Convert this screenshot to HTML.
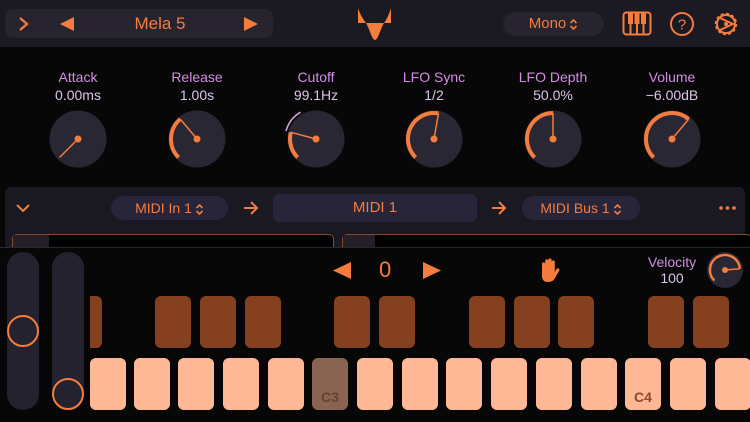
<!DOCTYPE html>
<html><head><meta charset="utf-8"><style>
*{margin:0;padding:0;box-sizing:border-box}
body{width:750px;height:422px;background:#070707;position:relative;overflow:hidden;font-family:"Liberation Sans",sans-serif;color:#f47c3c}
.a{position:absolute}
.top{left:0;top:0;width:750px;height:47px;background:#1b1921}
.lbl{color:#d38ee3;font-size:14px;text-align:center;width:110px}
.val{color:#dcc3ea;font-size:14px;text-align:center;width:110px}
.w{background:#ffb896;border-radius:6px;width:36px;height:52px;top:358px}
.b{background:#85411f;border-radius:6px;width:36px;height:52px;top:296px}
.ud{display:inline-block;vertical-align:middle;margin-left:3px}
</style></head><body>
<div class="a top"></div>
<div class="a" style="left:5px;top:9px;width:268px;height:29px;background:#27242f;border-radius:8px"></div>
<svg class="a" style="left:17px;top:15px" width="14" height="18"><path d="M3 3 L10 9 L3 15" stroke="#f47c3c" stroke-width="2.2" fill="none"/></svg>
<svg class="a" style="left:59px;top:16px" width="16" height="16"><path d="M15 1 L1 8 L15 15Z" fill="#f47c3c"/></svg>
<div class="a" style="left:100px;top:14px;width:120px;text-align:center;font-size:17px">Mela 5</div>
<svg class="a" style="left:243px;top:16px" width="16" height="16"><path d="M1 1 L15 8 L1 15Z" fill="#f47c3c"/></svg>
<svg class="a" style="left:356px;top:6px" width="38" height="36"><g fill="#f47c3c"><path d="M2 2 C4 8 7 13 10 17 L2 17 Z"/><path d="M10 17 C14 24 16 34 19 34 C22 34 24 24 28 17 Z"/><path d="M35 2 C33 8 31 13 28 17 L35 17 Z"/></g></svg>
<div class="a" style="left:503px;top:12px;width:101px;height:24px;background:#27242f;border-radius:12px"></div>
<div class="a" style="left:503px;top:15px;width:101px;text-align:center;font-size:15px">Mono<svg class="ud" width="9" height="13"><path d="M1.5 5 L4.5 2 L7.5 5 M1.5 8 L4.5 11 L7.5 8" stroke="#f47c3c" stroke-width="1.6" fill="none"/></svg></div>
<svg class="a" style="left:622px;top:11px" width="30" height="25"><rect x="1.5" y="1.5" width="27" height="22" rx="3" fill="none" stroke="#f47c3c" stroke-width="2"/><path d="M8.5 2v21M15 2v21M21.5 2v21" stroke="#f47c3c" stroke-width="2"/><rect x="6" y="2" width="5" height="11" fill="#f47c3c"/><rect x="12.5" y="2" width="5" height="11" fill="#f47c3c"/><rect x="19" y="2" width="5" height="11" fill="#f47c3c"/></svg>
<svg class="a" style="left:669px;top:11px" width="26" height="26"><circle cx="13" cy="13" r="11" fill="none" stroke="#f47c3c" stroke-width="2"/><text x="13" y="18.5" text-anchor="middle" font-size="15" fill="#f47c3c" font-family="Liberation Sans">?</text></svg>
<svg class="a" style="left:711px;top:9px" width="30" height="30"><circle cx="15" cy="15" r="10" fill="none" stroke="#f47c3c" stroke-width="2.4" stroke-dasharray="3 2.2"/><circle cx="15" cy="15" r="9" fill="none" stroke="#f47c3c" stroke-width="2"/><path d="M9 9 L22 15 L9 21" fill="none" stroke="#f47c3c" stroke-width="2"/><circle cx="15" cy="15" r="2" fill="#f47c3c"/></svg>

<div class="a lbl" style="left:23px;top:69px">Attack</div><div class="a val" style="left:23px;top:87px">0.00ms</div>
<div class="a lbl" style="left:142px;top:69px">Release</div><div class="a val" style="left:142px;top:87px">1.00s</div>
<div class="a lbl" style="left:261px;top:69px">Cutoff</div><div class="a val" style="left:261px;top:87px">99.1Hz</div>
<div class="a lbl" style="left:379px;top:69px">LFO Sync</div><div class="a val" style="left:379px;top:87px">1/2</div>
<div class="a lbl" style="left:498px;top:69px">LFO Depth</div><div class="a val" style="left:498px;top:87px">50.0%</div>
<div class="a lbl" style="left:617px;top:69px">Volume</div><div class="a val" style="left:617px;top:87px">−6.00dB</div>

<svg class="a" style="left:48px;top:109px;overflow:visible" width="60" height="60"><circle cx="30" cy="30" r="28.5" fill="#2a2735"/><line x1="30" y1="30" x2="11.6" y2="48.4" stroke="#f47c3c" stroke-width="1.5"/><circle cx="30" cy="30" r="3.5" fill="#f47c3c"/></svg>
<svg class="a" style="left:167px;top:109px;overflow:visible" width="60" height="60"><circle cx="30" cy="30" r="28.5" fill="#2a2735"/><path d="M11.6 48.4 A26 26 0 0 1 13.3 10.1" stroke="#f47c3c" stroke-width="4" fill="none"/><line x1="30" y1="30" x2="13.3" y2="10.1" stroke="#f47c3c" stroke-width="1.5"/><circle cx="30" cy="30" r="3.5" fill="#f47c3c"/></svg>
<svg class="a" style="left:286px;top:109px;overflow:visible" width="60" height="60"><circle cx="30" cy="30" r="28.5" fill="#2a2735"/><path d="M0.06 22 A31 31 0 0 1 14.5 3.2" stroke="#d9a6e6" stroke-width="1.5" fill="none"/><path d="M11.6 48.4 A26 26 0 0 1 4.9 23.3" stroke="#f47c3c" stroke-width="4" fill="none"/><line x1="30" y1="30" x2="4.9" y2="23.3" stroke="#f47c3c" stroke-width="1.5"/><circle cx="30" cy="30" r="3.5" fill="#f47c3c"/></svg>
<svg class="a" style="left:404px;top:109px;overflow:visible" width="60" height="60"><circle cx="30" cy="30" r="28.5" fill="#2a2735"/><path d="M11.6 48.4 A26 26 0 0 1 34.5 4.4" stroke="#f47c3c" stroke-width="4" fill="none"/><line x1="30" y1="30" x2="34.5" y2="4.4" stroke="#f47c3c" stroke-width="1.5"/><circle cx="30" cy="30" r="3.5" fill="#f47c3c"/></svg>
<svg class="a" style="left:523px;top:109px;overflow:visible" width="60" height="60"><circle cx="30" cy="30" r="28.5" fill="#2a2735"/><path d="M11.6 48.4 A26 26 0 0 1 30 4" stroke="#f47c3c" stroke-width="4" fill="none"/><line x1="30" y1="30" x2="30" y2="4" stroke="#f47c3c" stroke-width="1.5"/><circle cx="30" cy="30" r="3.5" fill="#f47c3c"/></svg>
<svg class="a" style="left:642px;top:109px;overflow:visible" width="60" height="60"><circle cx="30" cy="30" r="28.5" fill="#2a2735"/><path d="M11.6 48.4 A26 26 0 0 1 46.7 10.1" stroke="#f47c3c" stroke-width="4" fill="none"/><line x1="30" y1="30" x2="46.7" y2="10.1" stroke="#f47c3c" stroke-width="1.5"/><circle cx="30" cy="30" r="3.5" fill="#f47c3c"/></svg>

<div class="a" style="left:5px;top:187px;width:740px;height:62px;background:#1a1820;border-radius:6px"></div>
<svg class="a" style="left:15px;top:202px" width="16" height="12"><path d="M2 3 L8 9 L14 3" stroke="#f47c3c" stroke-width="2" fill="none"/></svg>
<div class="a" style="left:111px;top:196px;width:117px;height:24px;background:#28253a;border-radius:12px;text-align:center;font-size:14px;line-height:24px">MIDI In 1<svg class="ud" width="9" height="13"><path d="M1.5 5 L4.5 2 L7.5 5 M1.5 8 L4.5 11 L7.5 8" stroke="#f47c3c" stroke-width="1.6" fill="none"/></svg></div>
<svg class="a" style="left:242px;top:200px" width="18" height="16"><path d="M2 8 H15 M9 2 L15 8 L9 14" stroke="#f47c3c" stroke-width="2" fill="none"/></svg>
<div class="a" style="left:273px;top:194px;width:204px;height:28px;background:#28253a;border-radius:6px;text-align:center;font-size:15px;line-height:28px">MIDI 1</div>
<svg class="a" style="left:490px;top:200px" width="18" height="16"><path d="M2 8 H15 M9 2 L15 8 L9 14" stroke="#f47c3c" stroke-width="2" fill="none"/></svg>
<div class="a" style="left:522px;top:196px;width:118px;height:24px;background:#28253a;border-radius:12px;text-align:center;font-size:14px;line-height:24px">MIDI Bus 1<svg class="ud" width="9" height="13"><path d="M1.5 5 L4.5 2 L7.5 5 M1.5 8 L4.5 11 L7.5 8" stroke="#f47c3c" stroke-width="1.6" fill="none"/></svg></div>
<svg class="a" style="left:718px;top:205px" width="20" height="6"><circle cx="3" cy="3" r="1.8" fill="#f47c3c"/><circle cx="9.5" cy="3" r="1.8" fill="#f47c3c"/><circle cx="16" cy="3" r="1.8" fill="#f47c3c"/></svg>
<div class="a" style="left:12px;top:234px;width:322px;height:20px;border:1px solid #8a4a2a;border-radius:5px;background:#000"></div>
<div class="a" style="left:13px;top:235px;width:36px;height:14px;background:#241f28"></div>
<div class="a" style="left:342px;top:234px;width:410px;height:20px;border:1px solid #8a4a2a;border-radius:5px;background:#000"></div>
<div class="a" style="left:343px;top:235px;width:32px;height:14px;background:#241f28"></div>

<div class="a" style="left:0;top:247px;width:750px;height:175px;background:#070707;border-top:1px solid #2a2732"></div>
<div class="a" style="left:7px;top:252px;width:32px;height:158px;background:#25222f;border-radius:16px"></div>
<div class="a" style="left:52px;top:252px;width:32px;height:158px;background:#25222f;border-radius:16px"></div>
<div class="a" style="left:7px;top:315px;width:32px;height:32px;border:2px solid #f47c3c;border-radius:50%"></div>
<div class="a" style="left:52px;top:378px;width:32px;height:32px;border:2px solid #f47c3c;border-radius:50%"></div>

<svg class="a" style="left:332px;top:261px" width="20" height="20"><path d="M19 1 L1 9.5 L19 18Z" fill="#f47c3c"/></svg>
<div class="a" style="left:379px;top:257px;font-size:22px">0</div>
<svg class="a" style="left:422px;top:261px" width="20" height="20"><path d="M1 1 L19 9.5 L1 18Z" fill="#f47c3c"/></svg>
<svg class="a" style="left:538px;top:257px" width="22" height="26"><path d="M4 14 V7 a1.6 1.6 0 0 1 3.2 0 V12 V4 a1.6 1.6 0 0 1 3.2 0 V12 V3 a1.6 1.6 0 0 1 3.2 0 V12 V5 a1.6 1.6 0 0 1 3.2 0 V15 L18.5 12 a1.6 1.6 0 0 1 2.8 1.5 L17 21 Q15 25 10 25 Q4 25 4 19Z" fill="#f47c3c"/></svg>
<div class="a" style="left:632px;top:254px;width:80px;text-align:center;color:#d38ee3;font-size:14px">Velocity</div>
<div class="a" style="left:632px;top:270px;width:80px;text-align:center;color:#dcc3ea;font-size:14px">100</div>
<svg class="a" style="left:705px;top:250px;overflow:visible" width="40" height="40"><circle cx="20" cy="20" r="18" fill="#2a2735"/><path d="M9.4 30.6 A15 15 0 1 1 34.9 18.7" stroke="#f47c3c" stroke-width="2.5" fill="none"/><line x1="20" y1="20" x2="34.9" y2="18.7" stroke="#f47c3c" stroke-width="1.5"/><circle cx="20" cy="20" r="3" fill="#f47c3c"/></svg>

<div class="a b" style="left:90px;width:12px;border-radius:0 6px 6px 0"></div>
<div class="a b" style="left:155px"></div><div class="a b" style="left:200px"></div><div class="a b" style="left:245px"></div>
<div class="a b" style="left:334px"></div><div class="a b" style="left:379px"></div>
<div class="a b" style="left:469px"></div><div class="a b" style="left:514px"></div><div class="a b" style="left:558px"></div>
<div class="a b" style="left:648px"></div><div class="a b" style="left:693px"></div>

<div class="a w" style="left:90px"></div><div class="a w" style="left:134px"></div><div class="a w" style="left:178px"></div><div class="a w" style="left:223px"></div><div class="a w" style="left:268px"></div>
<div class="a w" style="left:312px;background:#8a6452;color:#6a4130;font-size:14px;text-align:center;padding-top:31px;font-weight:bold">C3</div>
<div class="a w" style="left:357px"></div><div class="a w" style="left:402px"></div><div class="a w" style="left:446px"></div><div class="a w" style="left:491px"></div><div class="a w" style="left:536px"></div><div class="a w" style="left:581px"></div>
<div class="a w" style="left:625px;color:#8a4a2a;font-size:14px;text-align:center;padding-top:31px;font-weight:bold">C4</div>
<div class="a w" style="left:670px"></div><div class="a w" style="left:715px"></div>
</body></html>
